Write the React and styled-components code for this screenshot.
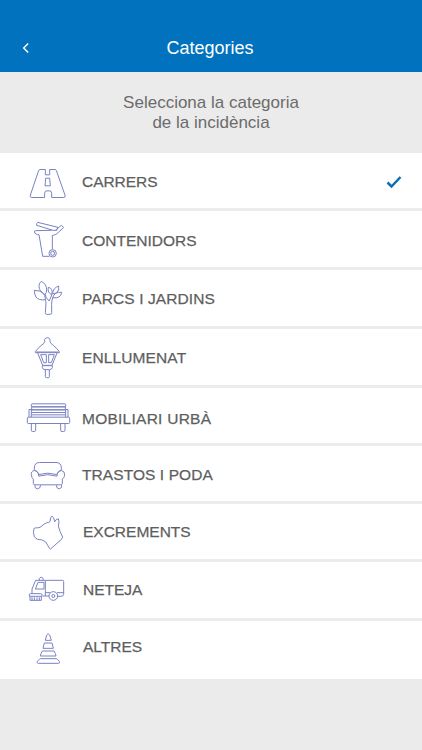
import React from 'react'
import styled, { createGlobalStyle } from 'styled-components'

const RoadIcon = () => (
  <Icon viewBox="0 10.5 162 132">
    <path d="M60 42h16v16h13V42h16q3 0 4 3l26 74q2 7-4 7H95v-13q0-7-7-7h-7q-7 0-7 7v13H34q-5 0-3-7l25-74q1-3 4-3z" />
    <path d="M77 68h12l2 23H75z" />
  </Icon>
)

const BinIcon = () => (
  <Icon viewBox="0 186 162 132">
    <path d="M53 202l61 15-4 9h-11l-49-15q-1-7 3-9z" />
    <path d="M107 225l17-14 7 6-20 19q-7 5-14 5v42M46 227l49-1M44 227v7l8 5h5l11 65h20" />
    <circle cx="98" cy="295" r="11" />
    <circle cx="98" cy="295" r="6" />
  </Icon>
)

const TreeIcon = () => (
  <Icon viewBox="0 18 162 132">
    <path d="M64 34q16 8 16 26 0 8-5 14Q56 63 57 47q1-9 7-13z" />
    <path d="M43 61q16 0 25 7 7 6 9 21-22 3-29-8-5-8-5-20z" />
    <path d="M85 52q14 2 11 21-6 0-10-7-3-7-1-14z" />
    <path d="M116 48q3 14-6 20-6 4-12 3 1-17 18-23z" />
    <path d="M98 83q6-19 27-16-3 20-27 16z" />
    <path d="M76 73q1 10 6 14 3 3 5 6 5-8 9-21M98 83q-3 9-3 20v25q0 5-4 5H80q-4 0-4-5l2-30q0-6-4-10" />
  </Icon>
)

const LampIcon = () => (
  <Icon viewBox="0 195 162 132">
    <path d="M74 215v-7q2-5 8-5t8 5v7q1 5 11 12 9 7 17 18v3H46v-3q8-11 17-18 11-7 11-12z" />
    <path d="M48 246h68M53 249l15 37h28l15-37M67 287v6q1 5 8 6h14q7-1 8-6v-6z" />
    <path d="M62 254h17v24h-8zM86 254h17l-9 24h-8zM76 300v20q0 3 3 3h6q3 0 3-3v-20" />
  </Icon>
)

const BenchIcon = () => (
  <Icon viewBox="0 10.5 162 132">
    <rect x="34" y="40" width="103" height="9" rx="2" />
    <rect x="35" y="49" width="101" height="9" />
    <path d="M34 58h103M34 66h103M34 73h103M34 80V57h-7v23M137 80V57h7v23" />
    <rect x="22" y="80" width="127" height="19" rx="3" />
    <path d="M34 99v20q0 4 4 4h5q4 0 4-4V99M122 99v20q0 4 4 4h5q4 0 4-4V99" />
  </Icon>
)

const SofaIcon = () => (
  <Icon viewBox="0 184.5 162 132">
    <path d="M43 239v-6q0-17 16-17h49q16 0 16 17v6" />
    <path d="M56 257q1-15-13-17-11 2-9 14 1 8 6 12v13q0 4 5 4h77q5 0 5-4v-13q6-5 7-12 1-12-10-14-13 2-13 17-28-9-55 0z" />
    <path d="M44 239q8 3 13 13 26-8 53 0 4-10 14-13" />
    <path d="M45 284q-2 10 7 11 9 0 10-11M109 284q0 11 9 11 8-1 7-11" />
  </Icon>
)

const DogIcon = () => (
  <Icon viewBox="0 28.5 162 132">
    <path d="M90 63q0-13 6-16 5 2 7 12l1 5q4-9 11-9 4 7 0 22 4 16 13 33-2 7-11 13l-26 23q-4-3-7-10-5-15-19-18-16 1-22-9-5-14-1-25 4-3 11-2 8 0 13-6 6-6 14-9 8-1 10-4z" />
  </Icon>
)

const TruckIcon = () => (
  <Icon viewBox="0 204 162 132">
    <path d="M58 241v-6q1-3 6-3 4 0 5 3v6" />
    <path d="M36 281v-14l11-26h29v47h11M68 288h8M76 241h52q3 0 3 3v35M76 278h15M111 278h20v5q0 6-9 6h-9" />
    <path d="M72 247H54l-8 20h26z" />
    <path d="M28 289v-5q0-3 4-3h30q4 0 4 3v5zM30 289v12h34v-12M36 292v9M43 292v9M51 292v9M58 292v9" />
    <circle cx="100" cy="288" r="13" />
    <circle cx="100" cy="288" r="4.500" />
  </Icon>
)

const ConeIcon = () => (
  <Icon viewBox="0 54 162 132">
    <path d="M76 91l4-16q4-8 9 0l5 16zM73 99h23l4 16H69zM67 123h35q5 7 6 15H61q1-8 6-15zM62 146h46q3 0 5 3l5 5q3 6-3 6H55q-6-1-3-6l5-5q2-3 5-3z" />
  </Icon>
)

const categories = [
  { name: 'CARRERS', icon: RoadIcon, height: 58, offset: 1, tracking: -0.05, selected: true },
  { name: 'CONTENIDORS', icon: BinIcon, height: 59, offset: 2, tracking: 0 },
  { name: 'PARCS I JARDINS', icon: TreeIcon, height: 59, offset: 1, tracking: 0.1 },
  { name: 'ENLLUMENAT', icon: LampIcon, height: 59, offset: 0.5, tracking: 0.12 },
  { name: 'MOBILIARI URBÀ', icon: BenchIcon, height: 58, offset: 3, tracking: 0.25 },
  { name: 'TRASTOS I PODA', icon: SofaIcon, height: 58, offset: 1, tracking: 0.08 },
  { name: 'EXCREMENTS', icon: DogIcon, height: 58, offset: 0.5, indent: 9, tracking: 0 },
  { name: 'NETEJA', icon: TruckIcon, height: 59, offset: 0, indent: 9, tracking: 0 },
  { name: 'ALTRES', icon: ConeIcon, height: 58, offset: -3, indent: 9, tracking: 0 }
]

const App = () => (
  <Screen>
    <GlobalStyle />
    <Header>
      <BackButton aria-label="Enrere">
        <svg width="8" height="12" viewBox="0 0 8 12">
          <path d="M6.200 1.500L1.700 6l4.500 4.500" fill="none" stroke="#fff" strokeWidth="1.500" />
        </svg>
      </BackButton>
      <Title>Categories</Title>
    </Header>
    <Intro>
      Selecciona la categoria
      <br />
      de la incidència
    </Intro>
    <List>
      {categories.map(({ name, icon: CategoryIcon, height, offset, indent, tracking, selected }) => (
        <Row key={name} $height={height}>
          <CategoryIcon />
          <Label $offset={offset} $indent={indent} $tracking={tracking}>{name}</Label>
          {selected && (
            <Check width="16" height="14" viewBox="0 0 16 14">
              <path d="M1.500 7.500l4 4 9-9.500" fill="none" stroke="#0b70b4" strokeWidth="2.500" />
            </Check>
          )}
        </Row>
      ))}
    </List>
  </Screen>
)

export default App

const GlobalStyle = createGlobalStyle`
  body {
    margin: 0;
    background: #ebebeb;
  }
`

const Screen = styled.div`
  display: flex;
  flex-direction: column;
  min-height: 750px;
  background: #ebebeb;
  font-family: 'Liberation Sans', Arial, sans-serif;
`

const Header = styled.header`
  display: grid;
  grid-template-columns: 52px 1fr 54px;
  align-items: center;
  box-sizing: border-box;
  height: 72px;
  padding-top: 24px;
  background: #0072be;
`

const BackButton = styled.button`
  display: flex;
  padding: 0 0 0 22px;
  border: 0;
  background: none;
`

const Title = styled.h1`
  margin: 0;
  color: #fff;
  font-size: 18px;
  font-weight: 400;
  line-height: 24px;
  text-align: center;
`

const Intro = styled.p`
  box-sizing: border-box;
  height: 81px;
  margin: 0;
  padding-top: 21px;
  color: #6b6b6b;
  font-size: 17px;
  line-height: 20px;
  text-align: center;
`

const List = styled.ul`
  margin: 0;
  padding: 0;
  list-style: none;
`

const Row = styled.li`
  display: flex;
  align-items: center;
  box-sizing: border-box;
  height: ${props => props.$height}px;
  padding: 0 20px;
  border-bottom: 3px solid #ececec;
  background: #fff;

  &:last-child {
    border-bottom: 0;
  }
`

const Icon = styled.svg`
  flex: none;
  width: 54px;
  height: 44px;
  fill: none;
  stroke: #7a82c2;
  stroke-width: 3;
  stroke-linejoin: round;
`

const Label = styled.span`
  flex: 1;
  padding-top: ${props => Math.max(props.$offset, 0) * 2}px;
  padding-bottom: ${props => Math.max(-props.$offset, 0) * 2}px;
  padding-left: ${props => props.$indent || 8}px;
  color: #5e5e5e;
  font-size: 15.5px;
  letter-spacing: ${props => props.$tracking}px;
  line-height: 20px;
  -webkit-text-stroke: 0.25px #5e5e5e;
`

const Check = styled.svg`
  flex: none;
  margin-top: 3px;
`
